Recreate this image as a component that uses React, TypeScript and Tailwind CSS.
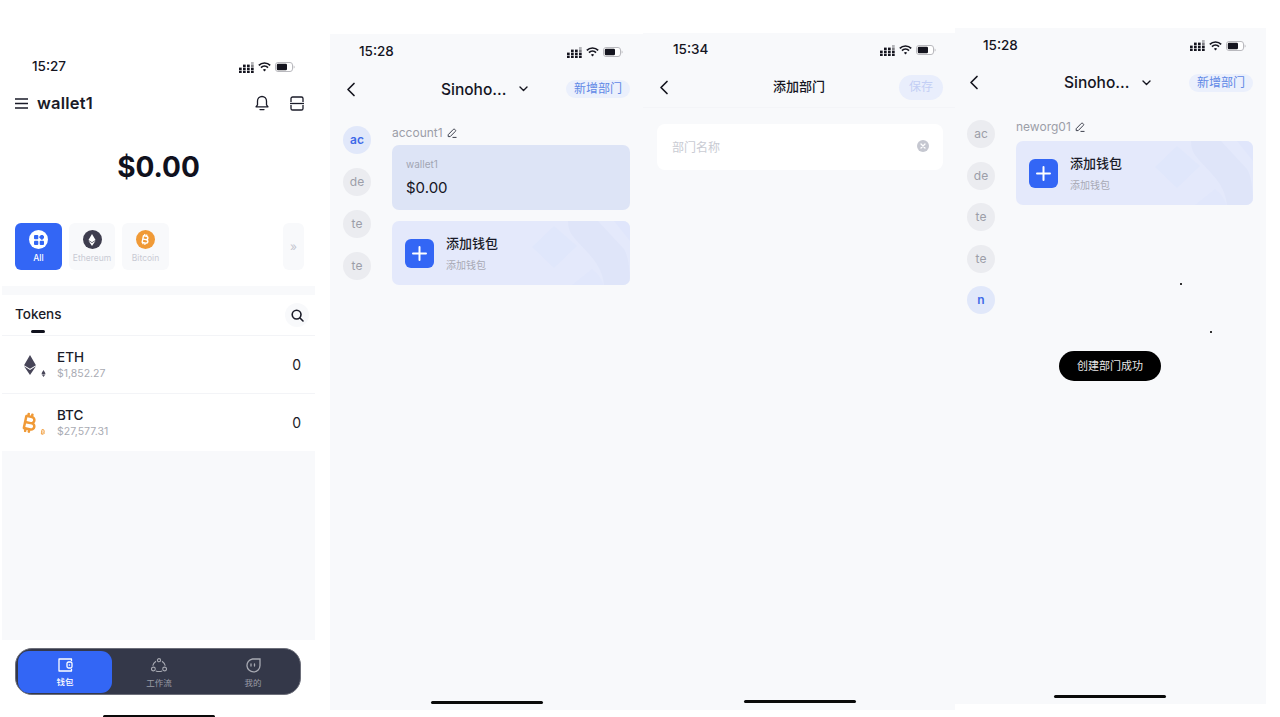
import React from "react";
import { FaBitcoinSign, FaEthereum } from "react-icons/fa6";

const font = "font-['Inter','Noto_Sans_CJK_SC',sans-serif]";

function Signal() {
  return (
    <svg width="15" height="11" viewBox="0 0 15 11" fill="#15151f">
      <rect x="0" y="5.6" width="2.7" height="2.4" />
      <rect x="0" y="8.6" width="2.7" height="2.4" />
      <rect x="4" y="2.6" width="2.7" height="2.4" />
      <rect x="4" y="5.6" width="2.7" height="2.4" />
      <rect x="4" y="8.6" width="2.7" height="2.4" />
      <rect x="8" y="2.6" width="2.7" height="2.4" />
      <rect x="8" y="5.6" width="2.7" height="2.4" />
      <rect x="8" y="8.6" width="2.7" height="2.4" />
      <rect x="12" y="0" width="2.7" height="2.4" opacity=".3" />
      <rect x="12" y="2.6" width="2.7" height="2.4" opacity=".55" />
      <rect x="12" y="5.6" width="2.7" height="2.4" />
      <rect x="12" y="8.6" width="2.7" height="2.4" />
    </svg>
  );
}

function Wifi() {
  return (
    <svg width="13" height="10" viewBox="0 0 13 10" fill="none" stroke="#15151f" strokeWidth="1.7">
      <path d="M.8 3.3a8.2 8.2 0 0 1 11.4 0" />
      <path d="M3 5.6a5 5 0 0 1 7 0" />
      <path d="M6.5 9.6 4.9 7.8a2.3 2.3 0 0 1 3.2 0Z" fill="#15151f" stroke="none" />
    </svg>
  );
}

function Battery() {
  return (
    <svg width="20" height="10" viewBox="0 0 20 10">
      <rect x=".5" y=".5" width="17" height="9" rx="2.5" fill="#fff" stroke="#b9b9be" />
      <rect x="1.8" y="1.8" width="10.2" height="6.4" rx="1.2" fill="#15151f" />
      <path d="M18.6 3.4c.8.3 1 1 1 1.6s-.2 1.3-1 1.6Z" fill="#b9b9be" />
    </svg>
  );
}

function StatusBar({ time, cls }: { time: string; cls: string }) {
  return (
    <div className={`flex items-center justify-between ${cls}`}>
      <span className="text-[13.5px] font-medium leading-none text-[#15151f]">{time}</span>
      <div className="flex items-center gap-[4px]">
        <Signal />
        <Wifi />
        <Battery />
      </div>
    </div>
  );
}

function Back() {
  return (
    <svg width="10" height="15" viewBox="0 0 10 15" fill="none" stroke="#15151f" strokeWidth="1.7" strokeLinecap="round" strokeLinejoin="round">
      <path d="M8 1.5 2 7.5l6 6" />
    </svg>
  );
}

function Pen() {
  return (
    <svg width="10" height="10" viewBox="0 0 10 10" fill="none" stroke="#3c3f4c" strokeWidth="1">
      <path d="M1.2 6.7 6.3 1.4a1 1 0 0 1 1.5 0l.5.5a1 1 0 0 1 0 1.5L3.2 8.6H1.2Z" />
      <path d="M5.5 9.4h4" />
    </svg>
  );
}

function Avatar({ text, active }: { text: string; active?: boolean }) {
  return (
    <div
      className={`flex h-[28px] w-[28px] items-center justify-center rounded-full text-[12px] ${
        active ? "bg-[#e1e8fa] font-semibold text-[#3f6ae8]" : "bg-[#ebecf0] text-[#9c9ea8]"
      }`}
    >
      {text}
    </div>
  );
}

function AddCard() {
  return (
    <div className="relative flex h-[64px] items-center gap-[12px] overflow-hidden rounded-[7px] bg-[#e4e9fb] pl-[13px]">
      <svg className="absolute right-0 top-0" width="98" height="64" viewBox="0 0 98 64">
        <path d="M0 26 22 5l23 20-23 22Z" fill="#e0e7fb" />
        <path d="M36 0H66L92 28Q98 38 98 64H72C70 40 50 28 40 14Q36 8 36 0Z" fill="#dfe5f9" />
        <path d="M82 0H98V20Z" fill="#e0e6fb" />
        <path d="M40 64 60 48Q68 54 72 64Z" fill="#e1e7fb" />
      </svg>
      <div className="relative flex h-[29px] w-[29px] items-center justify-center rounded-[6px] bg-[#3366f5]">
        <svg width="15" height="15" viewBox="0 0 15 15" stroke="#fff" strokeWidth="2" strokeLinecap="round">
          <path d="M7.5 1v13M1 7.5h13" />
        </svg>
      </div>
      <div className="relative flex flex-col gap-[8px]">
        <span className="text-[13px] font-medium leading-[16px] text-[#1a1b28]">添加钱包</span>
        <span className="text-[10px] leading-[12px] text-[#a8aab5]">添加钱包</span>
      </div>
    </div>
  );
}

function OrgHeader({ cls }: { cls: string }) {
  return (
    <div className={`flex items-center ${cls}`}>
      <Back />
      <span className="ml-[85px] mt-[1px] w-[66px] text-[15.5px] font-medium text-[#15151f]">Sinoho...</span>
      <svg className="ml-[12px]" width="9" height="6" viewBox="0 0 9 6" fill="none" stroke="#15151f" strokeWidth="1.4" strokeLinecap="round" strokeLinejoin="round">
        <path d="M1 1l3.5 3.5L8 1" />
      </svg>
      <span className="ml-auto flex h-[18px] w-[64px] items-center justify-center rounded-full bg-[#ebf0fc] text-[12px] text-[#6088e6]">新增部门</span>
    </div>
  );
}

function Tab({ label, active, children }: { label: string; active?: boolean; children: React.ReactNode }) {
  return (
    <div className={`flex h-[42px] w-[94px] flex-col items-center justify-center gap-[5px] pt-[2px] ${active ? "rounded-[11px] bg-[#3366f5] text-white font-medium" : "text-[#9a9ca6]"}`}>
      {children}
      <span className="text-[8.5px] leading-[10px]">{label}</span>
    </div>
  );
}

function TokenRow({ name, price, icon, small, border }: { name: string; price: string; icon: React.ReactNode; small: React.ReactNode; border?: boolean }) {
  return (
    <div className={`flex shrink-0 items-center pl-[18px] pr-[14px] ${border ? "h-[58px] border-b border-[#f3f4f7]" : "h-[57px]"}`}>
      <div className="relative flex h-[26px] w-[37px] items-center">
        {icon}
        <div className="absolute bottom-[1px] left-[20px] flex">{small}</div>
      </div>
      <div className="flex flex-col">
        <span className="text-[13.5px] font-medium leading-[18px] text-[#1a1b28]">{name}</span>
        <span className="mt-[1px] text-[10.5px] leading-[14px] text-[#a9abb3]">{price}</span>
      </div>
      <span className="ml-auto text-[14px] text-[#1a1b28]">0</span>
    </div>
  );
}

function HomeBar({ cls }: { cls: string }) {
  return <div className={`h-[3px] w-[112px] rounded-full bg-[#0a0a0a] ${cls}`} />;
}

export default function App() {
  return (
    <div className={`flex h-[717px] w-[1280px] items-start overflow-hidden bg-white pl-[2px] ${font}`}>
      {/* Screen 1 */}
      <div className="flex h-[717px] w-[313px] shrink-0 flex-col bg-white">
        <StatusBar time="15:27" cls="h-[18px] mt-[58px] pl-[30px] pr-[20px]" />
        <div className="mt-[15px] flex h-[24px] items-center pl-[13px] pr-[11px]">
          <svg width="13" height="11" viewBox="0 0 13 11" stroke="#1a1b28" strokeWidth="1.3">
            <path d="M0 1h13M0 5.5h13M0 10h13" />
          </svg>
          <span className="ml-[9px] text-[16.5px] font-semibold tracking-[0.2px] text-[#1a1b28]">wallet1</span>
          <svg className="ml-auto" width="14" height="16" viewBox="0 0 14 16" fill="none" stroke="#1a1b28" strokeWidth="1.3" strokeLinejoin="round">
            <path d="M1 11.8h12l-1.5-2V6a4.5 4.5 0 0 0-9 0v3.8Z" />
            <path d="M5 14.6h4" strokeLinecap="round" />
          </svg>
          <svg className="ml-[21px]" width="14" height="15" viewBox="0 0 14 15" fill="none" stroke="#1a1b28" strokeWidth="1.3">
            <path d="M1 6V2.6A1.6 1.6 0 0 1 2.6 1h8.8A1.6 1.6 0 0 1 13 2.6V6" />
            <path d="M1 9v3.4A1.6 1.6 0 0 0 2.6 14h8.8a1.6 1.6 0 0 0 1.6-1.6V9" />
            <path d="M0 7.5h14" />
          </svg>
        </div>
        <div className="mt-[35px] text-center text-[28px] font-bold leading-[34px] text-[#10111d]">$0.00</div>
        <div className="mt-[39px] flex h-[47px] pl-[13px] pr-[11px]">
          <div className="flex w-[47px] flex-col items-center justify-center gap-[4px] rounded-[6px] bg-[#3366f5]">
            <div className="flex h-[19px] w-[19px] items-center justify-center rounded-full bg-white">
              <svg width="10" height="10" viewBox="0 0 10 10" fill="#3366f5">
                <rect width="4.3" height="4.3" rx="1" />
                <rect x="5.7" width="4.3" height="4.3" rx="1" transform="rotate(45 7.85 2.15)" />
                <rect y="5.7" width="4.3" height="4.3" rx="1" />
                <rect x="5.7" y="5.7" width="4.3" height="4.3" rx="1" />
              </svg>
            </div>
            <span className="text-[8.5px] font-medium leading-[10px] text-white">All</span>
          </div>
          <div className="ml-[7px] flex w-[46px] flex-col items-center justify-center gap-[4px] rounded-[6px] bg-[#f8f9fb]">
            <div className="flex h-[19px] w-[19px] items-center justify-center rounded-full bg-[#3e3d4e]">
              <FaEthereum className="text-[12px] text-white" />
            </div>
            <span className="text-[8.5px] leading-[10px] text-[#c9cbd4]">Ethereum</span>
          </div>
          <div className="ml-[7px] flex w-[47px] flex-col items-center justify-center gap-[4px] rounded-[6px] bg-[#f8f9fb]">
            <div className="flex h-[19px] w-[19px] items-center justify-center rounded-full bg-[#f09a37]">
              <FaBitcoinSign className="rotate-[12deg] text-[11px] text-white" />
            </div>
            <span className="text-[8.5px] leading-[10px] text-[#c9cbd4]">Bitcoin</span>
          </div>
          <div className="ml-auto flex w-[21px] items-center justify-center rounded-[6px] bg-[#f8f9fb]">
            <span className="text-[12px] text-[#c4c6d0]">»</span>
          </div>
        </div>
        <div className="mt-[16px] h-[9px] shrink-0 bg-[#f8f9fb]" />
        <div className="relative flex h-[41px] shrink-0 items-center justify-between border-b border-[#f3f4f7] pl-[13px] pr-[6px]">
          <span className="mb-[2px] text-[13.5px] font-medium text-[#1a1b28]">Tokens</span>
          <span className="absolute bottom-[2px] left-[29px] h-[3px] w-[14px] rounded-full bg-[#10111d]" />
          <div className="flex h-[24px] w-[24px] items-center justify-center rounded-full bg-[#f8f9fb]">
            <svg width="13" height="13" viewBox="0 0 13 13" fill="none" stroke="#1a1b28" strokeWidth="1.6" strokeLinecap="round">
              <circle cx="5.6" cy="5.6" r="4.4" />
              <path d="M9 9l3 3" />
            </svg>
          </div>
        </div>
        <TokenRow
          name="ETH"
          price="$1,852.27"
          border
          icon={<FaEthereum className="text-[20px] text-[#474558]" />}
          small={<FaEthereum className="text-[7px] text-[#474558]" />}
        />
        <TokenRow
          name="BTC"
          price="$27,577.31"
          icon={<FaBitcoinSign className="rotate-[12deg] text-[20px] text-[#f09a37]" />}
          small={<FaBitcoinSign className="rotate-[12deg] text-[6px] text-[#f09a37]" />}
        />
        <div className="h-[189px] shrink-0 bg-[#f8f9fb]" />
        <div className="mx-[13px] mt-[8px] flex h-[47px] w-[286px] shrink-0 items-center rounded-[17px] border border-[#6d6f7a] bg-[#343849] pl-[2px]">
          <Tab label="钱包" active>
            <svg width="15" height="14" viewBox="0 0 15 14" fill="none" stroke="#fff" strokeWidth="1.3" strokeLinejoin="round">
              <path d="M13.5 3V1H1v12h12.5v-2.2" />
              <rect x="9" y="4" width="5" height="6" rx="1.5" />
              <circle cx="11.4" cy="7" r=".8" fill="#fff" stroke="none" />
            </svg>
          </Tab>
          <Tab label="工作流">
            <svg width="16" height="15" viewBox="0 0 16 15" fill="none" stroke="#a7a9b2" strokeWidth="1.1">
              <circle cx="8" cy="2.2" r="1.6" />
              <circle cx="2.4" cy="11" r="1.9" />
              <circle cx="13.6" cy="11" r="1.9" />
              <path d="M5 3.2C3.2 4.4 2 6 1.8 7.8M11 3.2c1.8 1.2 3 2.8 3.2 4.6M4.8 13c2 .7 4.4.7 6.4 0" />
            </svg>
          </Tab>
          <Tab label="我的">
            <svg width="16" height="15" viewBox="0 0 16 15" fill="none" stroke="#a7a9b2" strokeWidth="1.3">
              <path d="M7.5 1H15v6.5A6.5 6.5 0 1 1 7.5 1Z" />
              <path d="M6 6v2M9.5 6v2" strokeLinecap="round" />
            </svg>
          </Tab>
        </div>
        <div className="mx-auto mt-[20px] h-[2px] w-[112px] shrink-0 overflow-hidden">
          <HomeBar cls="" />
        </div>
      </div>

      {/* Screen 2 */}
      <div className="ml-[15px] mt-[34px] flex h-[676px] w-[313px] shrink-0 flex-col bg-[#f8f9fb]">
        <StatusBar time="15:28" cls="h-[36px] pl-[29px] pr-[20px]" />
        <OrgHeader cls="h-[38px] pl-[16px] pr-[13px]" />
        <div className="flex flex-1 gap-[21px] pl-[13px] pr-[13px] pt-[18px]">
          <div className="flex flex-col gap-[14px]">
            <Avatar text="ac" active />
            <Avatar text="de" />
            <Avatar text="te" />
            <Avatar text="te" />
          </div>
          <div className="flex flex-1 flex-col">
            <div className="flex h-[19px] items-start gap-[4px] text-[12px] leading-[14px] text-[#9c9ea8]">
              account1
              <span className="mt-[2px]">
                <Pen />
              </span>
            </div>
            <div className="flex h-[65px] flex-col justify-center gap-[7px] rounded-[7px] bg-[#dde4f6] pl-[14px]">
              <span className="text-[10px] leading-[14px] text-[#a1a5b3]">wallet1</span>
              <span className="text-[15px] leading-[20px] text-[#15151f]">$0.00</span>
            </div>
            <div className="mt-[11px]">
              <AddCard />
            </div>
          </div>
        </div>
        <HomeBar cls="mx-auto mb-[6px]" />
      </div>

      {/* Screen 3 */}
      <div className="mt-[33px] flex h-[677px] w-[312px] shrink-0 flex-col bg-[#f8f9fb]">
        <StatusBar time="15:34" cls="h-[34px] pl-[30px] pr-[19px]" />
        <div className="relative flex h-[41px] items-center justify-between border-b border-[#f4f5f8] pl-[16px] pr-[12px]">
          <Back />
          <span className="absolute left-0 right-0 text-center text-[13px] font-medium text-[#15151f]">添加部门</span>
          <span className="flex h-[25px] w-[44px] items-center justify-center rounded-full bg-[#e9eefc] text-[12px] text-[#c3cff5]">保存</span>
        </div>
        <div className="ml-[14px] mr-[12px] mt-[16px] flex h-[46px] items-center justify-between rounded-[8px] bg-white pl-[15px] pr-[14px]">
          <span className="mt-[1px] text-[12px] text-[#c9cbd3]">部门名称</span>
          <svg className="mb-[3px]" width="12" height="12" viewBox="0 0 12 12">
            <circle cx="6" cy="6" r="6" fill="#c5c7d0" />
            <path d="M4 4l4 4M8 4l-4 4" stroke="#fff" strokeWidth="1.3" strokeLinecap="round" />
          </svg>
        </div>
        <HomeBar cls="ml-[101px] mt-auto mb-[7px]" />
      </div>

      {/* Screen 4 */}
      <div className="relative mt-[28px] flex h-[676px] w-[311px] shrink-0 flex-col bg-[#f8f9fb]">
        <StatusBar time="15:28" cls="h-[35px] pl-[28px] pr-[20px]" />
        <OrgHeader cls="h-[39px] pl-[14px] pr-[13px]" />
        <div className="flex flex-1 gap-[21px] pl-[12px] pr-[13px] pt-[18px]">
          <div className="flex flex-col gap-[13.6px]">
            <Avatar text="ac" />
            <Avatar text="de" />
            <Avatar text="te" />
            <Avatar text="te" />
            <Avatar text="n" active />
          </div>
          <div className="flex flex-1 flex-col">
            <div className="flex h-[21px] items-start gap-[4px] text-[12px] leading-[14px] text-[#9c9ea8]">
              neworg01
              <span className="mt-[2px]">
                <Pen />
              </span>
            </div>
            <AddCard />
          </div>
        </div>
        <span className="absolute left-[225px] top-[255px] h-[1.5px] w-[1.5px] bg-[#333]" />
        <span className="absolute left-[255px] top-[303px] h-[1.5px] w-[1.5px] bg-[#333]" />
        <div className="absolute left-[104px] top-[323px] flex h-[30px] w-[102px] items-center justify-center rounded-full bg-black text-[11px] text-[#e8e8e8]">
          创建部门成功
        </div>
        <HomeBar cls="ml-[99px] mb-[6px]" />
      </div>
    </div>
  );
}
